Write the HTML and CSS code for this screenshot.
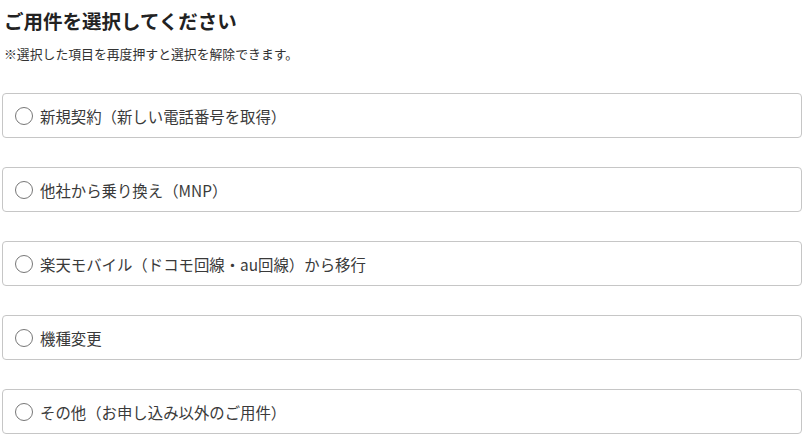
FILE: index.html
```html
<!DOCTYPE html>
<html lang="ja">
<head>
<meta charset="utf-8">
<link rel="stylesheet" href="styles.css">
</head>
<body>
<main class="page">
  <h1 class="title">ご用件を選択してください</h1>
  <p class="note">※選択した項目を再度押すと選択を解除できます。</p>
  <ul class="options">
    <li class="option"><span class="radio"></span><span class="label">新規契約（新しい電話番号を取得）</span></li>
    <li class="option"><span class="radio"></span><span class="label">他社から乗り換え（MNP）</span></li>
    <li class="option"><span class="radio"></span><span class="label">楽天モバイル（ドコモ回線・au回線）から移行</span></li>
    <li class="option"><span class="radio"></span><span class="label">機種変更</span></li>
    <li class="option"><span class="radio"></span><span class="label">その他（お申し込み以外のご用件）</span></li>
  </ul>
</main>
</body>
</html>
```
FILE: styles.css
```css
html, body {
  margin: 0;
  padding: 0;
  background: #fff;
}
body {
  font-family: "Noto Sans CJK JP", "Noto Sans", sans-serif;
  color: #333;
}
.page {
  padding: 0 6px 0 2px;
}
.title {
  margin: 0;
  padding: 6px 0 0 2px;
  font-size: 19.5px;
  line-height: 30px;
  font-weight: 700;
  color: #222;
}
.note {
  margin: 0;
  padding: 8px 0 0 2px;
  font-size: 12.85px;
  line-height: 20px;
  color: #333;
}
.options {
  list-style: none;
  margin: 0;
  padding: 0;
  padding-top: 29px;
  display: flex;
  flex-direction: column;
  gap: 29px;
}
.option {
  box-sizing: border-box;
  height: 45px;
  border: 1px solid #c6c6c6;
  border-radius: 4px;
  display: flex;
  align-items: center;
  padding-left: 12px;
}
.radio {
  box-sizing: border-box;
  width: 18px;
  height: 18px;
  border: 1px solid #777;
  border-radius: 50%;
  flex: none;
  margin-right: 7px;
}
.label {
  font-size: 15.4px;
  line-height: 20px;
  color: #3a3a3a;
}
```
